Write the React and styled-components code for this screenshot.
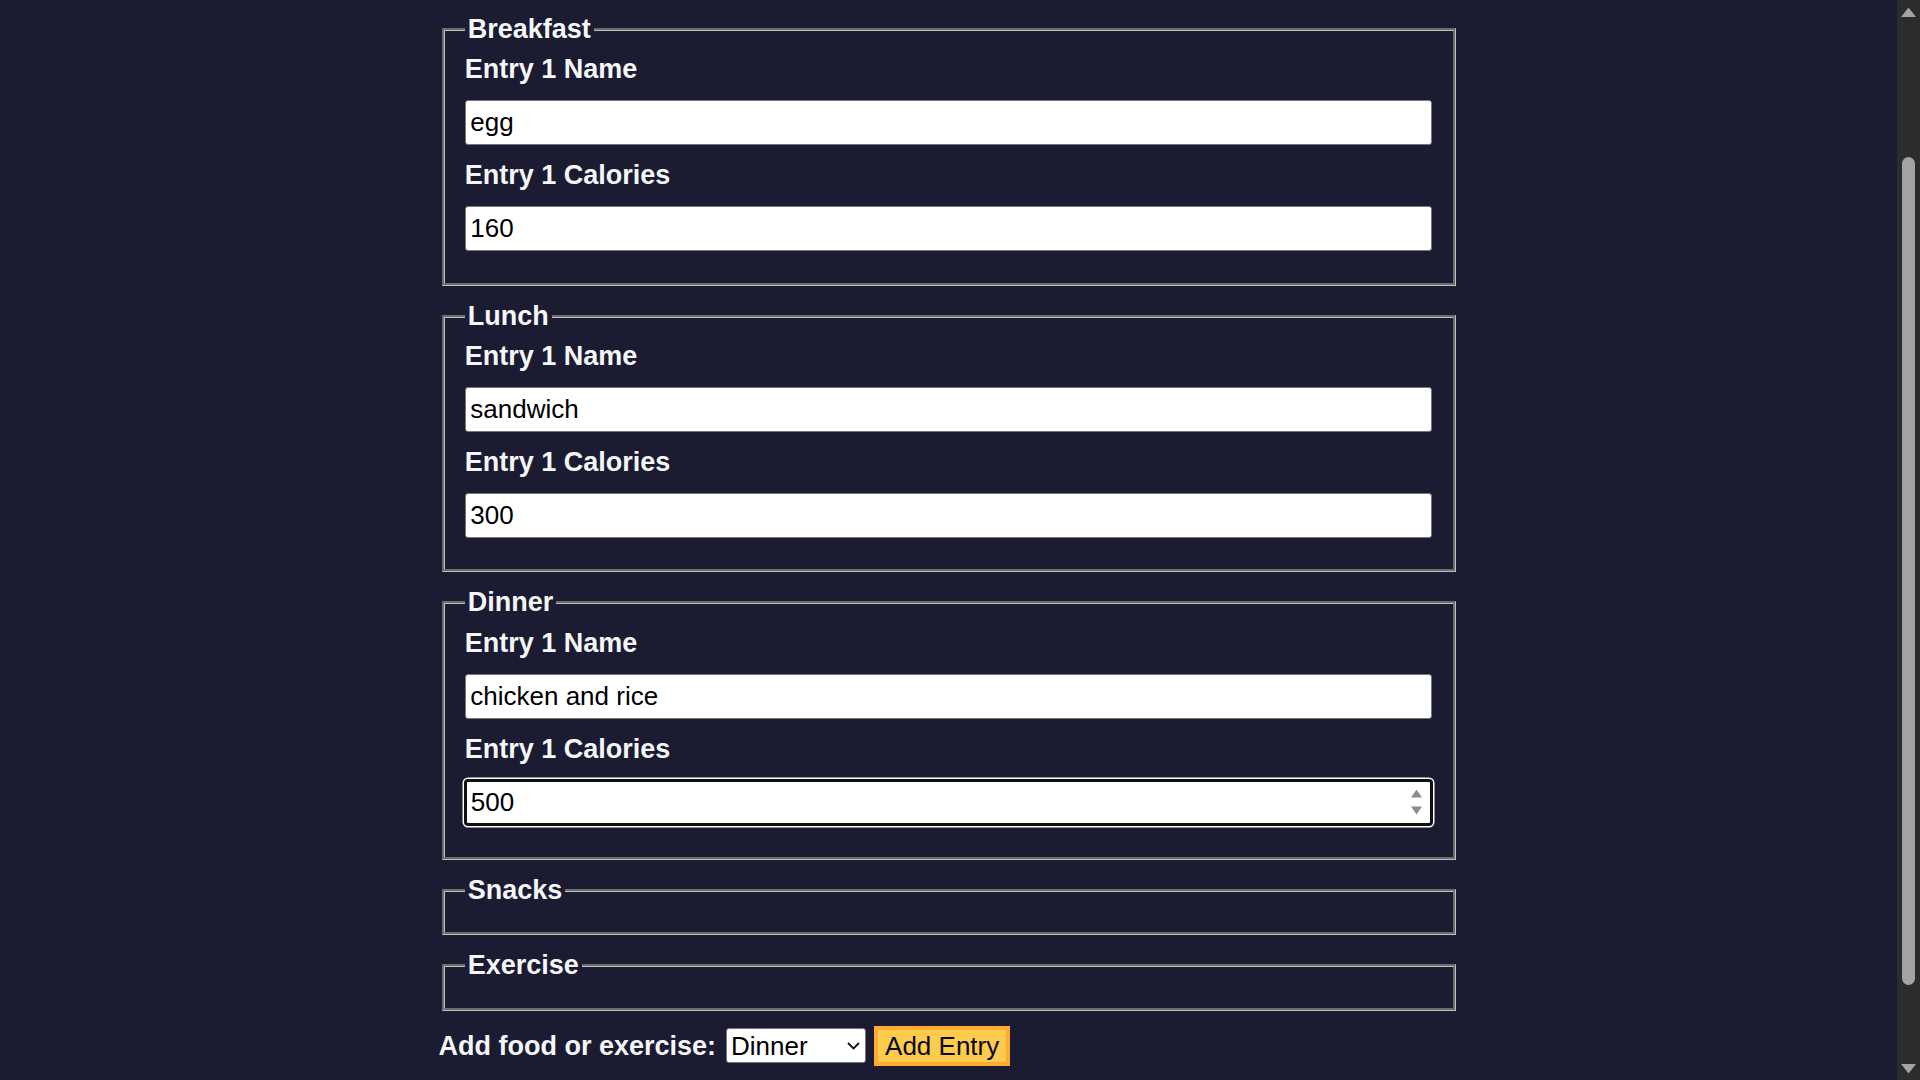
import React from 'react';
import styled, { createGlobalStyle, css } from 'styled-components';

const GlobalStyle = createGlobalStyle`
  html, body {
    margin: 0;
    padding: 0;
    height: 100%;
    background: #1b1b32;
  }
  body {
    font-family: "Liberation Sans", Arial, Helvetica, sans-serif;
    font-size: 27px;
    color: #f5f6f7;
    overflow: hidden;
  }
  #root { height: 100%; }
`;

const Page = styled.div`
  display: flex;
  height: 100vh;
  overflow: hidden;
  background: #1b1b32;
`;

const Viewport = styled.main`
  flex: 1;
  min-width: 0;
  overflow: hidden;
  padding-top: 14px;
`;

const Container = styled.div`
  width: 90%;
  max-width: 1020px;
  margin: 0 auto;
`;

const Fieldset = styled.fieldset`
  margin: 0 3px 15px;
  padding: 9.45px 20.25px 16.9px;
  border: 3px groove #c0c0c0;
  min-width: 0;
`;

const Legend = styled.legend`
  font-weight: bold;
  padding: 0 3px;
`;

const InputContainer = styled.div`
  display: flex;
  flex-direction: column;
`;

const Label = styled.label`
  font-weight: bold;
  margin-bottom: 15px;
`;

const FieldWrap = styled.div`
  position: relative;
  display: flex;
  flex-direction: column;
  margin-bottom: 15px;
`;

const TextInput = styled.input`
  font: 26px "Liberation Sans", Arial, Helvetica, sans-serif;
  color: #000;
  background: #fff;
  padding: 5.85px 4.5px;
  border: 1.5px solid #767676;
  border-radius: 3px;
  margin: 0;
  outline: none;
  ${(p) =>
    p.$focused &&
    css`
      padding: 5.35px 4px;
      border: 2px solid #101010;
      box-shadow: 0 0 0 1px #101010, 0 0 0 2.5px #ffffff;
    `}
`;

const Spinner = styled.svg`
  position: absolute;
  right: 10px;
  top: 50%;
  transform: translateY(-50%);
  pointer-events: none;
`;

const Controls = styled.div`
  display: flex;
  justify-content: space-between;
`;

const ControlGroup = styled.span`
  display: flex;
  align-items: baseline;
`;

const ControlLabel = styled.label`
  font-weight: bold;
  margin-right: 10px;
`;

const SelectWrap = styled.span`
  position: relative;
  display: inline-flex;
  margin-right: 8.5px;
`;

const Select = styled.select`
  appearance: none;
  -webkit-appearance: none;
  width: 139.5px;
  height: 34.5px;
  font: 26px "Liberation Sans", Arial, Helvetica, sans-serif;
  color: #000;
  background: #fff;
  padding: 0 0 0 4px;
  border: 1.5px solid #767676;
  border-radius: 3px;
  margin: 0;
  outline: none;
`;

const Chevron = styled.svg`
  position: absolute;
  right: 6px;
  top: 50%;
  transform: translateY(-50%);
  pointer-events: none;
`;

const AddButton = styled.button`
  font: 26px "Liberation Sans", Arial, Helvetica, sans-serif;
  color: #0a0a23;
  background: #fecc4c;
  border: 4.5px solid #feac32;
  padding: 0.75px 7px;
  margin: 0;
  cursor: pointer;
`;

const ScrollTrack = styled.div`
  flex: none;
  width: 23px;
  background: #2c2c2c;
  display: flex;
  flex-direction: column;
  align-items: center;
`;

const ArrowBox = styled.div`
  flex: none;
  height: 23px;
  width: 23px;
  display: flex;
  align-items: ${(p) => (p.$down ? 'flex-end' : 'flex-start')};
  justify-content: center;
  padding: ${(p) => (p.$down ? '0 0 6px' : '7px 0 0')};
  box-sizing: border-box;
`;

const ThumbArea = styled.div`
  flex: 1;
  width: 100%;
  display: flex;
  flex-direction: column;
  align-items: center;
`;

const Thumb = styled.div`
  width: 13px;
  height: 828px;
  margin-top: 134px;
  border-radius: 6.5px;
  background: #a3a3a3;
`;

const meals = [
  { name: 'Breakfast', entry: 'egg', calories: '160' },
  { name: 'Lunch', entry: 'sandwich', calories: '300' },
  { name: 'Dinner', entry: 'chicken and rice', calories: '500', focused: true },
];

function MealFieldset({ meal }) {
  const id = meal.name.toLowerCase();
  return (
    <Fieldset id={id}>
      <Legend>{meal.name}</Legend>
      <InputContainer>
        <Label htmlFor={`${id}-1-name`}>Entry 1 Name</Label>
        <FieldWrap>
          <TextInput type="text" id={`${id}-1-name`} defaultValue={meal.entry} />
        </FieldWrap>
        <Label htmlFor={`${id}-1-calories`}>Entry 1 Calories</Label>
        <FieldWrap>
          <TextInput
            type="text"
            id={`${id}-1-calories`}
            defaultValue={meal.calories}
            $focused={meal.focused}
          />
          {meal.focused && (
            <Spinner width="11" height="25" viewBox="0 0 11 25">
              <polygon points="0,8 5.5,0 11,8" fill="#8c8c8c" />
              <polygon points="0,17 5.5,25 11,17" fill="#8c8c8c" />
            </Spinner>
          )}
        </FieldWrap>
      </InputContainer>
    </Fieldset>
  );
}

export default function App() {
  return (
    <>
      <GlobalStyle />
      <Page>
        <Viewport>
          <Container>
            <form id="calorie-counter" onSubmit={(e) => e.preventDefault()}>
              {meals.map((m) => (
                <MealFieldset key={m.name} meal={m} />
              ))}
              <Fieldset id="snacks">
                <Legend>Snacks</Legend>
                <InputContainer />
              </Fieldset>
              <Fieldset id="exercise">
                <Legend>Exercise</Legend>
                <InputContainer />
              </Fieldset>
              <Controls>
                <ControlGroup>
                  <ControlLabel htmlFor="entry-dropdown">Add food or exercise:</ControlLabel>
                  <SelectWrap>
                    <Select id="entry-dropdown" name="options" defaultValue="dinner">
                      <option value="breakfast">Breakfast</option>
                      <option value="lunch">Lunch</option>
                      <option value="dinner">Dinner</option>
                      <option value="snacks">Snacks</option>
                      <option value="exercise">Exercise</option>
                    </Select>
                    <Chevron width="13" height="8" viewBox="0 0 13 8">
                      <path d="M1 1 L6.5 6.5 L12 1" fill="none" stroke="#111" strokeWidth="1.8" />
                    </Chevron>
                  </SelectWrap>
                  <AddButton type="button" id="add-entry">Add Entry</AddButton>
                </ControlGroup>
              </Controls>
            </form>
          </Container>
        </Viewport>
        <ScrollTrack>
          <ArrowBox>
            <svg width="15" height="10" viewBox="0 0 15 10">
              <path d="M7.5 0.5 L15 10 L0 10 Z" fill="#a3a3a3" />
            </svg>
          </ArrowBox>
          <ThumbArea>
            <Thumb />
          </ThumbArea>
          <ArrowBox $down>
            <svg width="15" height="10" viewBox="0 0 15 10">
              <path d="M0 0 L15 0 L7.5 9.5 Z" fill="#a3a3a3" />
            </svg>
          </ArrowBox>
        </ScrollTrack>
      </Page>
    </>
  );
}
